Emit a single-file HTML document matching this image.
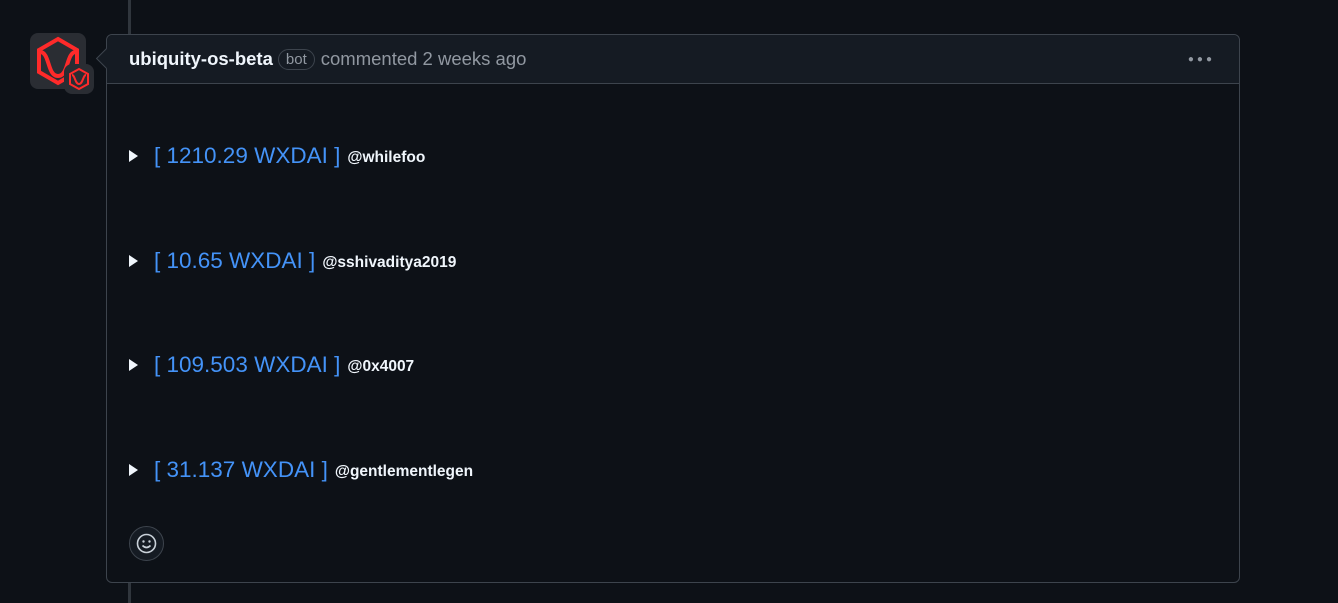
<!DOCTYPE html>
<html><head><style>
body{margin:0;background:#0d1117;width:1338px;height:603px;overflow:hidden;font-family:"Liberation Sans",sans-serif;position:relative}
.line{position:absolute;left:128px;width:3px;background:#30363d}
.card{position:absolute;left:106px;top:34px;width:1134px;height:549px;border:1px solid #3d444d;border-radius:6px;box-sizing:border-box}
.hdr{height:48px;background:#151b23;border-bottom:1px solid #3d444d;border-radius:6px 6px 0 0;display:flex;align-items:center;padding-left:22px;font-size:18.5px;color:#9198a1}
.hdr b{color:#f0f6fc;margin-right:5px}
.bot{border:1px solid #3d444d;border-radius:12px;padding:1px 7px;font-size:15px;margin-right:6px;color:#9198a1}
.caret{position:absolute;left:-8px;top:16px;width:14px;height:14px;background:#151b23;border-left:1px solid #3d444d;border-bottom:1px solid #3d444d;transform:rotate(45deg)}
.row{position:absolute;left:22px;display:flex;align-items:center;height:30px}
.tri{width:0;height:0;border-left:9px solid #f0f6fc;border-top:6px solid transparent;border-bottom:6px solid transparent;margin-right:16px}
.amt{color:#4493f8;font-size:22.5px;margin-right:7px}
.u{color:#f0f6fc;font-weight:bold;font-size:15.5px;margin-top:3px}
.dots{position:absolute;right:24px;top:19px;color:#9198a1;font-size:10px;letter-spacing:3px}
.emo{position:absolute;left:22px;top:491px;width:35px;height:35px;border-radius:50%;border:1px solid #3d444d;background:#151b23;box-sizing:border-box}
</style></head><body>
<div class="line" style="top:0;height:34px"></div>
<div class="line" style="top:582px;height:21px"></div>
<svg style="position:absolute;left:29px;top:32px" width="66" height="64">
<rect x="1" y="1" width="56" height="56" rx="8" fill="#2a2d33"/>
<path d="M29 7 L48 18 L48 40 L29 51 L10 40 L10 18 Z" fill="none" stroke="#ff2a2a" stroke-width="4"/>
<path d="M11 20 C21 20 18 44 29 44 C40 44 37 20 47 20" fill="none" stroke="#ff2a2a" stroke-width="4"/>
<rect x="35" y="32" width="30" height="30" rx="8" fill="#2a2d33"/>
<path d="M50 37 L59 42 L59 52 L50 57 L41 52 L41 42 Z" fill="none" stroke="#ff2a2a" stroke-width="2"/>
<path d="M43 43 C46 43 46 52 50 52 C54 52 54 43 57 43" fill="none" stroke="#ff2a2a" stroke-width="2"/>
</svg>
<div class="card">
<div class="caret"></div>
<div class="hdr" style="position:relative"><b>ubiquity-os-beta</b><span class="bot">bot</span>commented 2 weeks ago<span class="dots">●●●</span></div>
<div class="row" style="top:106px"><span class="tri"></span><span class="amt">[ 1210.29 WXDAI ]</span><span class="u">@whilefoo</span></div>
<div class="row" style="top:211px"><span class="tri"></span><span class="amt">[ 10.65 WXDAI ]</span><span class="u">@sshivaditya2019</span></div>
<div class="row" style="top:315px"><span class="tri"></span><span class="amt">[ 109.503 WXDAI ]</span><span class="u">@0x4007</span></div>
<div class="row" style="top:420px"><span class="tri"></span><span class="amt">[ 31.137 WXDAI ]</span><span class="u">@gentlementlegen</span></div>
<div class="emo"><svg width="33" height="33" style="position:absolute;left:0;top:0"><circle cx="16.5" cy="16.5" r="9" fill="none" stroke="#c9d1d9" stroke-width="1.6"/><circle cx="13.5" cy="14.5" r="1.2" fill="#c9d1d9"/><circle cx="19.5" cy="14.5" r="1.2" fill="#c9d1d9"/><path d="M12.5 18.5 Q16.5 22.5 20.5 18.5" fill="none" stroke="#c9d1d9" stroke-width="1.6"/></svg></div>
</div>
</body></html>
